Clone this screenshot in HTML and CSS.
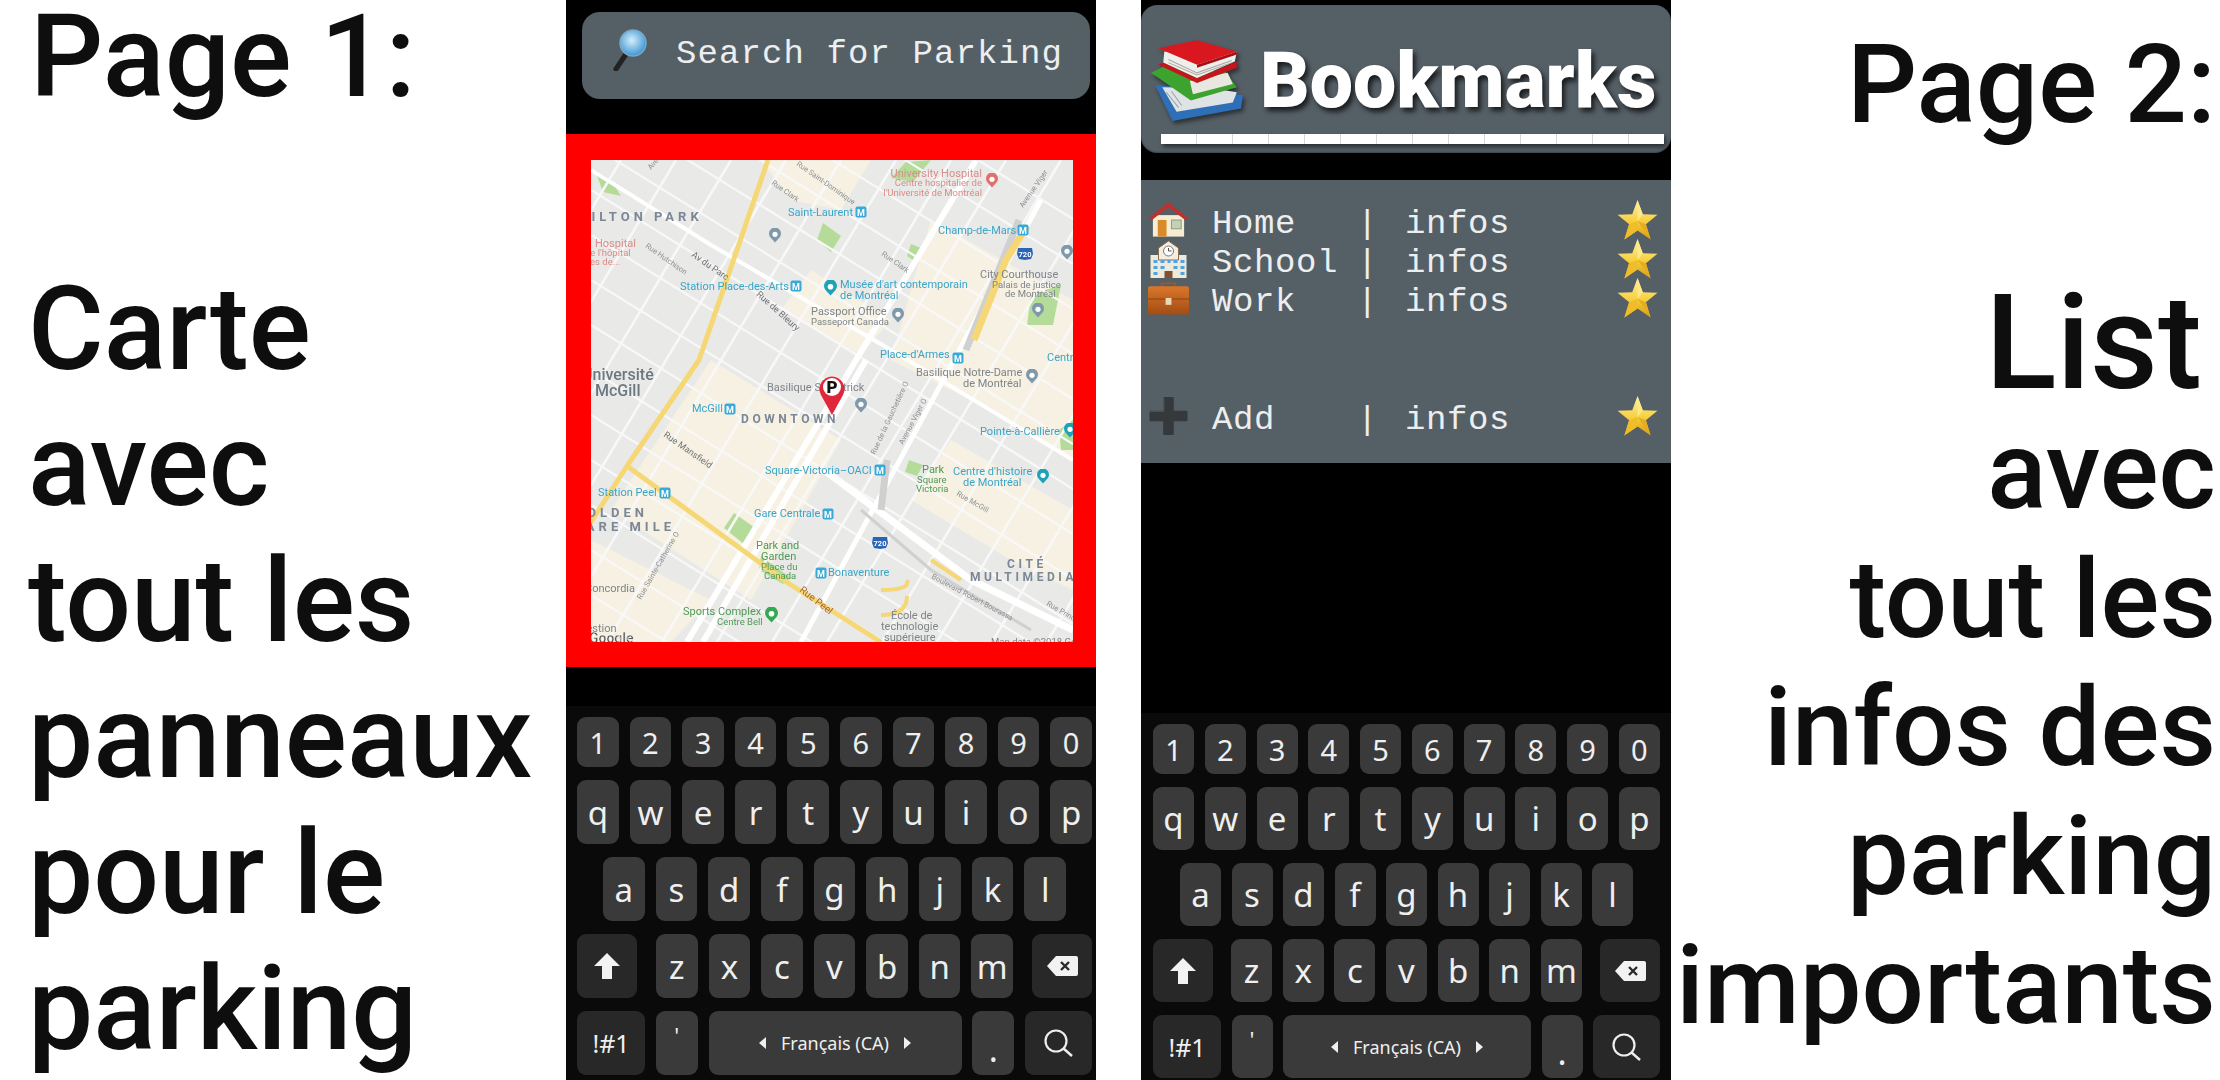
FILE: index.html
```html
<!DOCTYPE html>
<html lang="fr">
<head>
    <meta charset="UTF-8">
    <title>Parking</title>
    <link rel="stylesheet" href="styles.css">
</head>
<body>
<svg class="sprite" xmlns="http://www.w3.org/2000/svg">
    <defs>
        <linearGradient id="star-fill" x1="0" y1="0" x2="0" y2="1">
            <stop offset="0" stop-color="#fff3a6"/>
            <stop offset="0.55" stop-color="#f7cf3d"/>
            <stop offset="1" stop-color="#d99a12"/>
        </linearGradient>
        <linearGradient id="case-fill" x1="0" y1="0" x2="0" y2="1">
            <stop offset="0" stop-color="#d9762a"/>
            <stop offset="1" stop-color="#a24d14"/>
        </linearGradient>
        <radialGradient id="lens-fill" cx="0.45" cy="0.4" r="0.6">
            <stop offset="0" stop-color="#d6eefa"/>
            <stop offset="1" stop-color="#3d97d6"/>
        </radialGradient>
    </defs>
    <symbol id="star" viewBox="0 0 40 40">
        <polygon points="20,1 25,14.5 39,15 28,24 32.5,38.5 20,30 7.5,38.5 12,24 1,15 15,14.5" fill="url(#star-fill)"/>
        <polygon points="20,1 25,14.5 20,21" fill="#fde98a"/>
        <polygon points="20,21 28,24 32.5,38.5" fill="#e5ae1e"/>
        <polygon points="20,21 20,30 7.5,38.5 12,24" fill="#f0bd2a"/>
    </symbol>
    <symbol id="house" viewBox="0 0 42 36">
        <rect x="5" y="13" width="32" height="22" fill="#f6edd2"/>
        <polygon points="21,0 41,16 38,18 21,5 4,18 1,16" fill="#c1302b"/>
        <rect x="10" y="18" width="9" height="17" fill="#d98b2c"/>
        <rect x="24" y="18" width="10" height="9" fill="#c3d2b6" stroke="#8d9a80" stroke-width="1"/>
    </symbol>
    <symbol id="school" viewBox="0 0 38 38">
        <rect x="1" y="15" width="36" height="23" fill="#efe9da"/>
        <polygon points="19,1 29,8 29,20 9,20 9,8" fill="#f4eee0" stroke="#8a6a50" stroke-width="1"/>
        <circle cx="19" cy="11" r="5" fill="#fff" stroke="#777" stroke-width="1"/>
        <path d="M19 8v3h3" fill="none" stroke="#555" stroke-width="1"/>
        <path d="M4 20h4v3H4zM11 20h4v3h-4zM18 20h3v3h-3zM24 20h4v3h-4zM31 20h4v3h-4zM4 26h4v3H4zM11 26h4v3h-4zM24 26h4v3h-4zM31 26h4v3h-4zM4 32h4v3H4zM31 32h4v3h-4z" fill="#4fa3df"/>
        <rect x="15" y="31" width="8" height="7" fill="#7d5233"/>
    </symbol>
    <symbol id="briefcase" viewBox="0 0 42 34">
        <path d="M14 5V2h14v3" fill="none" stroke="#9b5a2a" stroke-width="2"/>
        <rect x="0" y="5" width="42" height="29" rx="2" fill="url(#case-fill)"/>
        <path d="M0 18h42" stroke="#8a4311" stroke-width="1"/>
        <rect x="18" y="17" width="6" height="7" fill="#ead9b8"/>
    </symbol>
    <symbol id="plus" viewBox="0 0 36 36">
        <path d="M14 0h8a1 1 0 0 1 1 1v12h12a1 1 0 0 1 1 1v8a1 1 0 0 1-1 1H23v12a1 1 0 0 1-1 1h-8a1 1 0 0 1-1-1V23H1a1 1 0 0 1-1-1v-8a1 1 0 0 1 1-1h12V1a1 1 0 0 1 1-1z" fill="#36393c"/>
        <path d="M13 13V1h1v13H0v-1z" fill="#55595d"/>
    </symbol>
    <symbol id="books" viewBox="0 0 90 80">
        <polygon points="4,45 21,80 88,68 90,55 60,50" fill="#2f6fb8"/>
        <polygon points="11,47 25,71 80,62 84,52 60,48" fill="#dfe3e6"/>
        <path d="M15 52l12 15M20 51l10 14" stroke="#9aa2aa" stroke-width="1"/>
        <polygon points="0,33 12,27 73,32 84,47 39,60" fill="#3da32f"/>
        <polygon points="38,41 75,33 80,44 41,54" fill="#e8e8e0"/>
        <polygon points="7,25 45,43 84,28 84,22 45,38 12,23" fill="#c4161c"/>
        <polygon points="12,23 13,12 84,12 82,22 45,38" fill="#eeeeea"/>
        <path d="M17 20l28 13 34-12M17 23l28 12 34-12" stroke="#a9a9a5" stroke-width="1" fill="none"/>
        <polygon points="7,9 45,1 84,12 45,25" fill="#d8181e"/>
        <polygon points="45,25 84,12 84,15 45,28" fill="#a80f14"/>
    </symbol>
    <symbol id="lens" viewBox="0 0 34 42">
        <path d="M13 25L3 40" stroke="#222" stroke-width="5" stroke-linecap="round"/>
        <circle cx="20" cy="14" r="13" fill="url(#lens-fill)" stroke="#7ba7c4" stroke-width="1.5"/>
    </symbol>
    <symbol id="shift" viewBox="0 0 26 26">
        <polygon points="13,0 26,13 18,13 18,26 8,26 8,13 0,13" fill="#f2f2f2"/>
    </symbol>
    <symbol id="backspace" viewBox="0 0 31 20">
        <path d="M9 0h20a2 2 0 0 1 2 2v16a2 2 0 0 1-2 2H9L0 10z" fill="#f2f2f2"/>
        <path d="M14 6l8 8M22 6l-8 8" stroke="#2a2a2a" stroke-width="2.4"/>
    </symbol>
    <symbol id="magnifier" viewBox="0 0 29 28">
        <circle cx="12" cy="12" r="10.5" fill="none" stroke="#eee" stroke-width="2.2"/>
        <path d="M19.5 19.5L28 27" stroke="#eee" stroke-width="2.4"/>
    </symbol>
    <symbol id="metro" viewBox="0 0 12 12">
        <rect x="0.5" y="0.5" width="11" height="11" rx="2" fill="#39a9d8"/>
        <text x="6" y="9.5" text-anchor="middle" class="metro-m">M</text>
    </symbol>
    <symbol id="poi" viewBox="0 0 12 14">
        <path d="M6 14L1.5 9A6 6 0 1 1 10.500 9z" fill="currentColor"/>
        <circle cx="6" cy="5.800" r="2.600" fill="#fff"/>
    </symbol>
    <symbol id="shield" viewBox="0 0 16 12">
        <path d="M1 0h14l1 6-2 5-6 1-6-1-2-5z" fill="#2b64b5"/>
        <text x="8" y="9" text-anchor="middle" class="shield-num">720</text>
    </symbol>
</svg>

<div class="page">
    <div class="caption caption-left">
        <div class="line-first">Page 1:</div>
        <div class="line line-carte">Carte</div>
        <div class="line">avec</div>
        <div class="line">tout les</div>
        <div class="line">panneaux</div>
        <div class="line">pour le</div>
        <div class="line">parking</div>
    </div>

    <div class="phone phone-map">
        <div class="search-bar">
            <svg class="lens-icon"><use href="#lens"/></svg>
            <span class="search-text">Search for Parking</span>
        </div>
        <div class="map-frame">
            <svg class="map" viewBox="0 0 482 482" xmlns="http://www.w3.org/2000/svg">
                <rect width="482" height="482" fill="#e9e9e8"/>
                <!-- blocks and parks -->
                <g fill="#f6f1e2">
                    <polygon points="120,200 250,280 160,440 20,350"/>
                    <polygon points="0,380 120,440 80,482 0,482"/>
                    <polygon points="340,60 482,140 482,300 400,250 300,200"/>
                    <polygon points="360,280 482,350 482,430 420,400 320,340"/>
                    <polygon points="220,110 300,160 270,195 190,150"/>
                    <polygon points="170,0 280,0 250,50 200,40"/>
                </g>
                <g fill="#b4dc98">
                    <polygon points="143,353 167,370 154,385 133,368"/>
                    <polygon points="232,63 250,76 240,92 226,80"/>
                    <polygon points="315,2 340,0 322,22 300,18"/>
                    <polygon points="4,10 20,20 30,36 12,32"/>
                    <polygon points="440,135 470,125 462,165 436,165"/>
                    <polygon points="318,300 332,305 326,316 314,312"/>
                    <polygon points="170,396 200,418 192,424 168,410"/>
                    <polygon points="320,84 330,88 322,100 316,96"/>
                    <polygon points="468,270 482,260 482,290 470,290"/>
                </g>
                <!-- streets, one way -->
                <g stroke="#f8f8f8" stroke-width="2.200" fill="none">
                    <path d="M0 -240L482 59M0 -195L482 104M0 -150L482 149M0 -105L482 194M0 -60L482 239M0 -15L482 284M0 30L482 329M0 75L482 374M0 120L482 419M0 165L482 464M0 210L482 509M0 255L482 554M0 300L482 599M0 345L482 644M0 390L482 689M0 435L482 734"/>
                </g>
                <!-- streets, the other way -->
                <g stroke="#f8f8f8" stroke-width="2.600" fill="none">
                    <path d="M30 0L-259 482M85 0L-204 482M140 0L-149 482M195 0L-94 482M250 0L-39 482M305 0L16 482M360 0L71 482M415 0L126 482M470 0L181 482M525 0L236 482M580 0L291 482M635 0L346 482M690 0L401 482M745 0L456 482"/>
                </g>
                <g stroke="#fff" fill="none">
                    <path d="M385 0L96 482" stroke-width="6"/>
                    <path d="M275 200L112 482" stroke-width="6"/>
                    <path d="M450 40L210 482" stroke-width="5"/>
                    <path d="M233 310L380 420L482 470" stroke-width="7"/>
                    <path d="M0 10L120 85L300 190L482 300" stroke-width="4"/>
                </g>
                <!-- highway and yellow roads -->
                <g stroke="#d0d0d0" fill="none">
                    <path d="M270 350L340 410L440 470" stroke-width="3"/>
                    <path d="M296 300L290 350" stroke-width="7"/>
                    <path d="M428 60L375 190" stroke-width="7"/>
                </g>
                <g stroke="#f6d776" fill="none" stroke-linejoin="round">
                    <path d="M177 0L108 200L36 306L-2 365" stroke-width="5"/>
                    <path d="M36 306L161 397L197 423L290 482" stroke-width="5"/>
                    <path d="M436 66L415 100L383 180" stroke-width="7"/>
                    <path d="M340 400L370 420" stroke-width="4"/>
                    <path d="M290 430Q320 430 316 420M290 455Q316 455 316 436" stroke-width="4"/>
                </g>

                <!-- labels -->
                <g class="ml-pink">
                    <text x="391" y="17">University Hospital</text>
                    <text x="391" y="26" class="ml-small">Centre hospitalier de</text>
                    <text x="391" y="36" class="ml-small">l'Université de Montréal</text>
                </g>
                <g class="ml-pink-start">
                    <text x="4" y="87">Hospital</text>
                    <text x="-6" y="96" class="ml-small">de l'hôpital</text>
                    <text x="-1" y="105" class="ml-small">es de...</text>
                </g>
                <g class="ml-blue">
                    <text x="197" y="56">Saint-Laurent</text>
                    <text x="347" y="74">Champ-de-Mars</text>
                    <text x="89" y="130">Station Place-des-Arts</text>
                    <text x="249" y="128">Musée d'art contemporain</text>
                    <text x="249" y="139">de Montréal</text>
                    <text x="289" y="198">Place-d'Armes</text>
                    <text x="456" y="201">Centre</text>
                    <text x="101" y="252">McGill</text>
                    <text x="389" y="275">Pointe-à-Callière</text>
                    <text x="174" y="314">Square-Victoria–OACI</text>
                    <text x="362" y="315">Centre d'histoire</text>
                    <text x="372" y="326">de Montréal</text>
                    <text x="7" y="336">Station Peel</text>
                    <text x="163" y="357">Gare Centrale</text>
                    <text x="237" y="416">Bonaventure</text>
                </g>
                <g class="ml-district">
                    <text x="-41" y="61">HAMILTON PARK</text>
                    <text x="150" y="263" class="ml-district-sm">DOWNTOWN</text>
                    <text x="57" y="357" text-anchor="end">GOLDEN</text>
                    <text x="84" y="371" text-anchor="end">SQUARE MILE</text>
                    <text x="416" y="408" class="ml-district-sm">CITÉ</text>
                    <text x="379" y="421" class="ml-district-sm">MULTIMEDIA</text>
                </g>
                <g class="ml-grey">
                    <text x="220" y="155">Passport Office</text>
                    <text x="220" y="165" class="ml-small">Passeport Canada</text>
                    <text x="389" y="118">City Courthouse</text>
                    <text x="401" y="128" class="ml-small">Palais de justice</text>
                    <text x="414" y="137" class="ml-small">de Montréal</text>
                    <text x="176" y="231">Basilique St. Patrick</text>
                    <text x="325" y="216">Basilique Notre-Dame</text>
                    <text x="372" y="227">de Montréal</text>
                    <text x="-6" y="432">Concordia</text>
                    <text x="-12" y="472">Gestion</text>
                    <text x="300" y="459">École de</text>
                    <text x="290" y="470">technologie</text>
                    <text x="293" y="481">supérieure</text>
                    <text x="400" y="485" class="ml-small">Map data ©2018 Google</text>
                </g>
                <text x="-9" y="220" class="ml-campus">Université</text>
                <text x="4" y="236" class="ml-campus">McGill</text>
                <g class="ml-green">
                    <text x="331" y="313">Park</text>
                    <text x="326" y="323" class="ml-small">Square</text>
                    <text x="325" y="332" class="ml-small">Victoria</text>
                    <text x="165" y="389">Park and</text>
                    <text x="170" y="400">Garden</text>
                    <text x="170" y="410" class="ml-small">Place du</text>
                    <text x="173" y="419" class="ml-small">Canada</text>
                    <text x="92" y="455">Sports Complex</text>
                    <text x="126" y="465" class="ml-small">Centre Bell</text>
                </g>
                <text x="-2" y="483" class="ml-google">Google</text>
                <g class="ml-street">
                    <text transform="translate(100,96) rotate(35)" class="ml-road">Av du Parc</text>
                    <text transform="translate(54,87) rotate(35)">Rue Hutchison</text>
                    <text transform="translate(180,24) rotate(35)">Rue Clark</text>
                    <text transform="translate(290,95) rotate(35)">Rue Clark</text>
                    <text transform="translate(165,135) rotate(42)" class="ml-road">Rue de Bleury</text>
                    <text transform="translate(432,48) rotate(-55)">Avenue Viger</text>
                    <text transform="translate(72,276) rotate(35)" class="ml-road">Rue Mansfield</text>
                    <text transform="translate(50,440) rotate(-60)">Rue Sainte-Catherine O</text>
                    <text transform="translate(312,285) rotate(-62)">Avenue Viger O</text>
                    <text transform="translate(284,295) rotate(-65)">Rue de la Gauchetière O</text>
                    <text transform="translate(365,335) rotate(30)">Rue McGill</text>
                    <text transform="translate(340,418) rotate(28)">Boulevard Robert-Bourassa</text>
                    <text transform="translate(455,445) rotate(30)">Rue Prince</text>
                    <text transform="translate(60,10) rotate(-50)">Avenue</text>
                    <text transform="translate(205,5) rotate(35)">Rue Saint-Dominique</text>
                </g>
                <text transform="translate(208,431) rotate(38)" class="ml-peel">Rue Peel</text>

                <use href="#metro" x="264" y="46" width="12" height="12"/>
                <use href="#metro" x="426" y="64" width="12" height="12"/>
                <use href="#metro" x="199" y="120" width="12" height="12"/>
                <use href="#metro" x="361" y="192" width="12" height="12"/>
                <use href="#metro" x="133" y="243" width="12" height="12"/>
                <use href="#metro" x="283" y="304" width="12" height="12"/>
                <use href="#metro" x="68" y="327" width="12" height="12"/>
                <use href="#metro" x="231" y="348" width="12" height="12"/>
                <use href="#metro" x="224" y="407" width="12" height="12"/>
                <use href="#shield" x="426" y="88" width="16" height="12"/>
                <use href="#shield" x="281" y="377" width="16" height="12"/>
                <use href="#poi" class="poi-pink" x="395" y="13" width="12" height="15"/>
                <use href="#poi" class="poi-grey" x="178" y="68" width="12" height="15"/>
                <use href="#poi" class="poi-grey" x="470" y="85" width="12" height="15"/>
                <use href="#poi" class="poi-grey" x="441" y="143" width="12" height="15"/>
                <use href="#poi" class="poi-grey" x="301" y="148" width="12" height="15"/>
                <use href="#poi" class="poi-grey" x="264" y="238" width="12" height="15"/>
                <use href="#poi" class="poi-grey" x="435" y="209" width="12" height="15"/>
                <use href="#poi" class="poi-teal" x="233" y="120" width="13" height="16"/>
                <use href="#poi" class="poi-teal" x="473" y="263" width="12" height="15"/>
                <use href="#poi" class="poi-teal" x="446" y="309" width="12" height="15"/>
                <use href="#poi" class="poi-green" x="174" y="447" width="13" height="16"/>

                <!-- parking pin -->
                <path d="M241 255L230 235A12.500 12.500 0 1 1 252 235z" fill="#e0263a"/>
                <circle cx="241" cy="227" r="9" fill="#fff"/>
                <text x="241" y="233" text-anchor="middle" class="pin-letter">P</text>
            </svg>
        </div>
        <div class="keyboard">
            <div class="key-row row-num">
                <span class="key num">1</span><span class="key num">2</span><span class="key num">3</span><span class="key num">4</span><span class="key num">5</span><span class="key num">6</span><span class="key num">7</span><span class="key num">8</span><span class="key num">9</span><span class="key num">0</span>
            </div>
            <div class="key-row">
                <span class="key">q</span><span class="key">w</span><span class="key">e</span><span class="key">r</span><span class="key">t</span><span class="key">y</span><span class="key">u</span><span class="key">i</span><span class="key">o</span><span class="key">p</span>
            </div>
            <div class="key-row row-home">
                <span class="key">a</span><span class="key">s</span><span class="key">d</span><span class="key">f</span><span class="key">g</span><span class="key">h</span><span class="key">j</span><span class="key">k</span><span class="key">l</span>
            </div>
            <div class="key-row">
                <span class="key key-side key-dark"><svg class="icon-shift"><use href="#shift"/></svg></span>
                <span class="key-group">
                    <span class="key">z</span><span class="key">x</span><span class="key">c</span><span class="key">v</span><span class="key">b</span><span class="key">n</span><span class="key">m</span>
                </span>
                <span class="key key-side key-dark"><svg class="icon-back"><use href="#backspace"/></svg></span>
            </div>
            <div class="key-row">
                <span class="key key-sym key-dark">!#1</span>
                <span class="key key-apos">'</span>
                <span class="key key-space"><i class="tri tri-left"></i>Français (CA)<i class="tri tri-right"></i></span>
                <span class="key key-dot">.</span>
                <span class="key key-go key-dark"><svg class="icon-mag"><use href="#magnifier"/></svg></span>
            </div>
        </div>
    </div>

    <div class="phone phone-list">
        <div class="list-head">
            <div class="head-title">
                <svg class="books-icon"><use href="#books"/></svg>
                <span class="head-text">Bookmarks</span>
            </div>
            <div class="head-rule"></div>
        </div>
        <div class="list-panel">
            <div class="list-row">
                <svg class="row-icon"><use href="#house"/></svg>
                <span class="row-name">Home</span><span class="row-sep">|</span><span class="row-info">infos</span>
                <svg class="row-star"><use href="#star"/></svg>
            </div>
            <div class="list-row">
                <svg class="row-icon"><use href="#school"/></svg>
                <span class="row-name">School</span><span class="row-sep">|</span><span class="row-info">infos</span>
                <svg class="row-star"><use href="#star"/></svg>
            </div>
            <div class="list-row">
                <svg class="row-icon"><use href="#briefcase"/></svg>
                <span class="row-name">Work</span><span class="row-sep">|</span><span class="row-info">infos</span>
                <svg class="row-star"><use href="#star"/></svg>
            </div>
            <div class="list-row row-add">
                <svg class="row-icon"><use href="#plus"/></svg>
                <span class="row-name">Add</span><span class="row-sep">|</span><span class="row-info">infos</span>
                <svg class="row-star"><use href="#star"/></svg>
            </div>
        </div>
        <div class="keyboard">
            <div class="key-row row-num">
                <span class="key num">1</span><span class="key num">2</span><span class="key num">3</span><span class="key num">4</span><span class="key num">5</span><span class="key num">6</span><span class="key num">7</span><span class="key num">8</span><span class="key num">9</span><span class="key num">0</span>
            </div>
            <div class="key-row">
                <span class="key">q</span><span class="key">w</span><span class="key">e</span><span class="key">r</span><span class="key">t</span><span class="key">y</span><span class="key">u</span><span class="key">i</span><span class="key">o</span><span class="key">p</span>
            </div>
            <div class="key-row row-home">
                <span class="key">a</span><span class="key">s</span><span class="key">d</span><span class="key">f</span><span class="key">g</span><span class="key">h</span><span class="key">j</span><span class="key">k</span><span class="key">l</span>
            </div>
            <div class="key-row">
                <span class="key key-side key-dark"><svg class="icon-shift"><use href="#shift"/></svg></span>
                <span class="key-group">
                    <span class="key">z</span><span class="key">x</span><span class="key">c</span><span class="key">v</span><span class="key">b</span><span class="key">n</span><span class="key">m</span>
                </span>
                <span class="key key-side key-dark"><svg class="icon-back"><use href="#backspace"/></svg></span>
            </div>
            <div class="key-row">
                <span class="key key-sym key-dark">!#1</span>
                <span class="key key-apos">'</span>
                <span class="key key-space"><i class="tri tri-left"></i>Français (CA)<i class="tri tri-right"></i></span>
                <span class="key key-dot">.</span>
                <span class="key key-go key-dark"><svg class="icon-mag"><use href="#magnifier"/></svg></span>
            </div>
        </div>
    </div>

    <div class="caption caption-right">
        <div class="right-page">Page 2:</div>
        <div class="right-list">List</div>
        <div class="right-line">avec</div>
        <div class="right-line">tout les</div>
        <div class="right-line">infos des</div>
        <div class="right-line">parking</div>
        <div class="right-line">importants</div>
    </div>
</div>
</body>
</html>
```

FILE: styles.css
```css
*{
    margin: 0;
    padding: 0;
    box-sizing: border-box;
}
html,body{
    width: 2220px;
    height: 1080px;
    overflow: hidden;
    background: #fff;
}
.sprite{
    display: block;
    width: 0;
    height: 0;
}
.page{
    display: flex;
    width: 2220px;
    height: 1080px;
}

/* big captions */
.caption{
    font-family: Roboto, "Liberation Sans", sans-serif;
    font-weight: 500;
    color: #0e0e0e;
    white-space: nowrap;
}
.caption-left{
    width: 566px;
    padding-left: 28px;
    font-size: 116px;
    line-height: 136px;
}
.line-first{
    font-size: 115px;
    line-height: 114px;
    padding-left: 2px;
}
.line-carte{
    margin-top: 147px;
}
.caption-right{
    flex: 1;
    min-width: 0;
    padding: 20px 4px 0 0;
    text-align: right;
    font-size: 110px;
    line-height: 128.7px;
}
.right-page{
    line-height: 129px;
}
.right-list{
    margin-top: 131px;
    font-size: 132px;
    line-height: 127px;
    padding-right: 14px;
}

/* phones */
.phone{
    display: flex;
    flex-direction: column;
    width: 530px;
    height: 1080px;
    background: #000;
}
.phone-list{
    margin-left: 45px;
}

/* search + map */
.search-bar{
    display: flex;
    align-items: center;
    height: 87px;
    margin: 12px 6px 0 16px;
    padding-left: 31px;
    background: #555f66;
    border-radius: 18px;
}
.lens-icon{
    width: 34px;
    height: 42px;
    flex: none;
    margin-bottom: 12px;
}
.search-text{
    margin-left: 29px;
    margin-bottom: 3px;
    font-family: "Liberation Mono", monospace;
    font-size: 34px;
    letter-spacing: 1.1px;
    color: #eceeef;
    white-space: nowrap;
}
.map-frame{
    height: 533px;
    margin-top: 35px;
    padding: 26px 23px 25px 25px;
    background: #f00;
}
.map{
    display: block;
    width: 482px;
    height: 482px;
    font-family: Roboto, sans-serif;
    font-size: 11px;
    filter: blur(0.35px);
}
.ml-small{
    font-size: 9.5px;
}
.ml-pink{
    fill: #d98d8a;
    text-anchor: end;
}
.ml-pink-start{
    fill: #d98d8a;
}
.ml-blue{
    fill: #3aa5c9;
}
.ml-grey{
    fill: #7f8488;
}
.ml-green{
    fill: #4f9a55;
}
.ml-district{
    fill: #7c8796;
    font-size: 13px;
    font-weight: 700;
    letter-spacing: 4px;
}
.ml-district-sm{
    font-size: 12px;
    letter-spacing: 3.6px;
}
.ml-campus{
    fill: #6d7780;
    font-size: 16px;
    font-weight: 500;
}
.ml-google{
    fill: #555;
    stroke: #fff;
    stroke-width: 0.4px;
    font-size: 14px;
    font-weight: 700;
}
.ml-street{
    fill: #8d9094;
    font-size: 7.5px;
}
.ml-road{
    font-size: 9px;
    fill: #6f7276;
}
.ml-peel{
    fill: #a5632a;
    font-size: 10px;
}
.metro-m{
    fill: #fff;
    font-size: 9px;
    font-weight: 700;
}
.shield-num{
    fill: #fff;
    font-size: 7.5px;
    font-weight: 700;
}
.poi-pink{
    color: #e0706d;
}
.poi-grey{
    color: #7f99aa;
}
.poi-teal{
    color: #1ea2b8;
}
.poi-green{
    color: #35a853;
}
.pin-letter{
    fill: #111;
    font-size: 17px;
    font-weight: 900;
}

/* bookmarks list */
.list-head{
    height: 148px;
    margin-top: 5px;
    padding: 33px 7px 0 10px;
    background: #555f66;
    border-radius: 16px;
    box-shadow: inset 0 -1px 2px rgba(0,0,0,0.3);
}
.head-title{
    display: flex;
    align-items: flex-start;
    height: 96px;
}
.books-icon{
    width: 92px;
    height: 84px;
    flex: none;
    filter: drop-shadow(2px 3px 2px rgba(0,0,0,0.5));
}
.head-text{
    margin-left: 17px;
    font-family: Roboto, sans-serif;
    font-size: 77px;
    line-height: 86px;
    font-weight: 900;
    color: #fff;
    text-shadow: 3px 4px 5px rgba(0,0,0,0.7);
}
.head-rule{
    height: 10px;
    margin: 0 0 0 10px;
    background: repeating-linear-gradient(90deg, #fff 0, #fff 35px, #d8d8d8 35px, #d8d8d8 36px);
    box-shadow: 2px 3px 4px rgba(0,0,0,0.5);
}
.list-panel{
    height: 283px;
    margin-top: 27px;
    padding: 20px 12px 0 7px;
    background: #555f66;
}
.list-row{
    display: flex;
    align-items: center;
    height: 39px;
    font-family: "Liberation Mono", monospace;
    font-size: 34px;
    line-height: 30px;
    letter-spacing: 0.6px;
    color: #eceeef;
}
.row-add{
    margin-top: 79px;
}
.row-icon{
    width: 41px;
    height: 38px;
    flex: none;
}
.row-name{
    width: 145px;
    margin-left: 23px;
    padding-top: 9px;
}
.row-sep{
    width: 48px;
    padding-top: 9px;
}
.row-info{
    flex: 1;
    padding-top: 9px;
}
.row-star{
    width: 43px;
    height: 42px;
    flex: none;
}

/* keyboard */
.keyboard{
    display: flex;
    flex-direction: column;
    gap: 13px;
    margin-top: auto;
    height: 374px;
    padding: 11px 4px 0 11px;
    background: #0a0a0a;
    --key-w: 41.6px;
    --row-h: 64px;
}
.phone-list .keyboard{
    height: 367px;
    padding: 11px 11px 0 12px;
    --key-w: 41px;
    --row-h: 63px;
}
.key-row{
    display: flex;
    justify-content: space-between;
    align-items: stretch;
    height: var(--row-h);
    flex: none;
}
.row-num{
    height: 50px;
}
.row-home{
    padding: 0 26px;
}
.phone-list .row-home{
    padding: 0 27px;
}
.key-group{
    display: flex;
    justify-content: space-between;
    width: 357px;
}
.phone-list .key-group{
    width: 351px;
}
.key{
    display: flex;
    align-items: center;
    justify-content: center;
    width: var(--key-w);
    flex: none;
    background: #3a3a3a;
    border-radius: 9px;
    font-family: "Noto Sans", "Open Sans", sans-serif;
    font-size: 33px;
    color: #efefef;
}
.num{
    font-size: 29px;
}
.key-dark{
    background: #282828;
}
.key-side{
    width: 60px;
}
.key-sym{
    width: 68px;
    font-size: 25px;
}
.key-apos{
    align-items: flex-start;
    padding-top: 9px;
    font-size: 22px;
}
.key-space{
    width: 253px;
    gap: 15px;
    font-size: 18px;
}
.phone-list .key-space{
    width: 248px;
}
.key-dot{
    align-items: flex-end;
    font-size: 34px;
    padding-bottom: 3px;
}
.key-go{
    width: 67px;
}
.tri{
    display: block;
    width: 0;
    height: 0;
    border-top: 6px solid transparent;
    border-bottom: 6px solid transparent;
}
.tri-left{
    border-right: 7px solid #efefef;
}
.tri-right{
    border-left: 7px solid #efefef;
}
.icon-shift{
    width: 26px;
    height: 26px;
}
.icon-back{
    width: 31px;
    height: 20px;
}
.icon-mag{
    width: 29px;
    height: 28px;
}
```
